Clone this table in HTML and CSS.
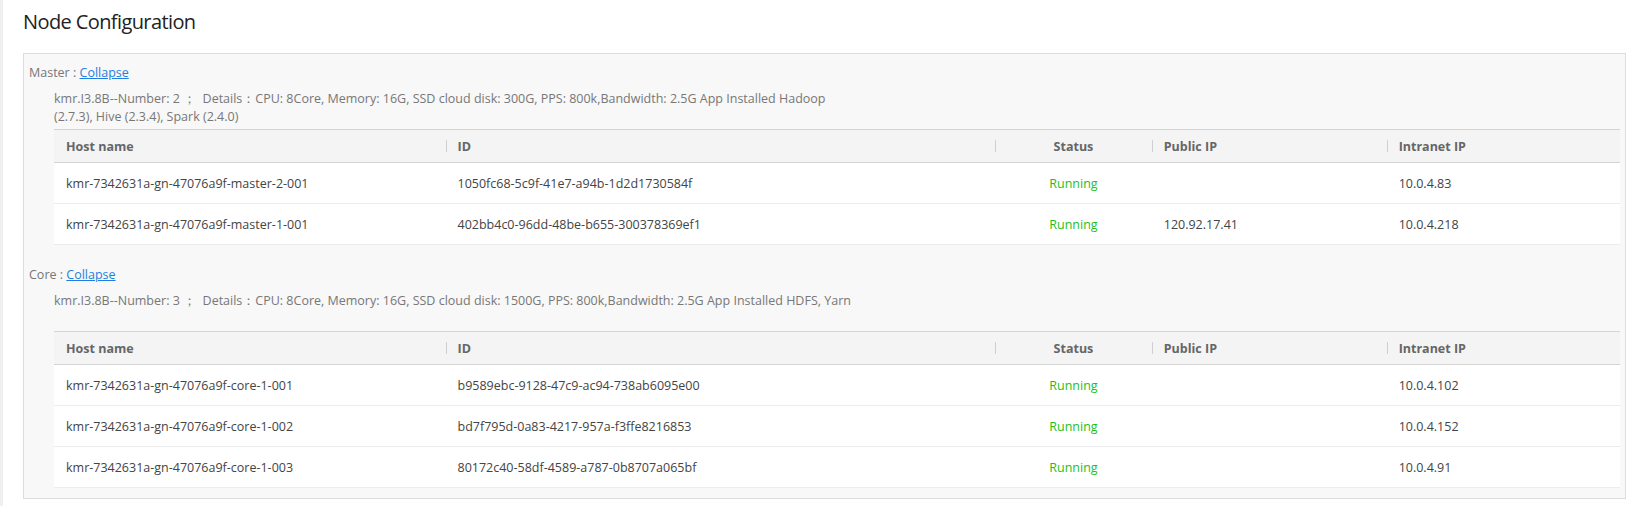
FILE: index.html
```html
<!DOCTYPE html>
<html lang="en">
<head>
<meta charset="utf-8">
<title>Node Configuration</title>
<link rel="stylesheet" href="styles.css">
</head>
<body>
<div class="page">
  <h1 class="title">Node Configuration</h1>
  <div class="panel">
    <section class="group">
      <div class="group-label">Master : <a href="#" class="link">Collapse</a></div>
      <div class="details">kmr.I3.8B--Number: 2 ；&nbsp; Details：CPU: 8Core, Memory: 16G, SSD cloud disk: 300G, PPS: 800k,Bandwidth: 2.5G App Installed Hadoop (2.7.3), Hive (2.3.4), Spark (2.4.0)</div>
      <table class="nodes">
        <colgroup><col class="c-host"><col class="c-id"><col class="c-status"><col class="c-pub"><col class="c-int"></colgroup>
        <thead>
          <tr><th>Host name</th><th class="sep">ID</th><th class="sep center">Status</th><th class="sep">Public IP</th><th class="sep">Intranet IP</th></tr>
        </thead>
        <tbody>
          <tr><td>kmr-7342631a-gn-47076a9f-master-2-001</td><td>1050fc68-5c9f-41e7-a94b-1d2d1730584f</td><td class="center running">Running</td><td></td><td>10.0.4.83</td></tr>
          <tr><td>kmr-7342631a-gn-47076a9f-master-1-001</td><td>402bb4c0-96dd-48be-b655-300378369ef1</td><td class="center running">Running</td><td>120.92.17.41</td><td>10.0.4.218</td></tr>
        </tbody>
      </table>
    </section>
    <section class="group">
      <div class="group-label">Core : <a href="#" class="link">Collapse</a></div>
      <div class="details">kmr.I3.8B--Number: 3 ；&nbsp; Details：CPU: 8Core, Memory: 16G, SSD cloud disk: 1500G, PPS: 800k,Bandwidth: 2.5G App Installed HDFS, Yarn</div>
      <table class="nodes">
        <colgroup><col class="c-host"><col class="c-id"><col class="c-status"><col class="c-pub"><col class="c-int"></colgroup>
        <thead>
          <tr><th>Host name</th><th class="sep">ID</th><th class="sep center">Status</th><th class="sep">Public IP</th><th class="sep">Intranet IP</th></tr>
        </thead>
        <tbody>
          <tr><td>kmr-7342631a-gn-47076a9f-core-1-001</td><td>b9589ebc-9128-47c9-ac94-738ab6095e00</td><td class="center running">Running</td><td></td><td>10.0.4.102</td></tr>
          <tr><td>kmr-7342631a-gn-47076a9f-core-1-002</td><td>bd7f795d-0a83-4217-957a-f3ffe8216853</td><td class="center running">Running</td><td></td><td>10.0.4.152</td></tr>
          <tr><td>kmr-7342631a-gn-47076a9f-core-1-003</td><td>80172c40-58df-4589-a787-0b8707a065bf</td><td class="center running">Running</td><td></td><td>10.0.4.91</td></tr>
        </tbody>
      </table>
    </section>
  </div>
</div>
</body>
</html>
```

FILE: styles.css
```css
html, body {
  margin: 0;
  padding: 0;
  background: #ffffff;
}

body {
  font-family: "Open Sans", "Noto Sans", sans-serif;
  font-size: 12.5px;
  color: #333;
}

.page {
  border-left: 3px solid #efefef;
  min-height: 506px;
  box-sizing: border-box;
  padding: 8px 16px 0 20px;
}

.title {
  margin: 0;
  font-size: 20px;
  font-weight: 400;
  letter-spacing: -0.6px;
  line-height: 28px;
  color: #222;
  height: 45px;
}

.panel {
  background: #f8f8f8;
  border: 1px solid #dddddd;
  padding: 0 5px 10px 5px;
}

.group {
  padding-top: 10px;
}

.group + .group {
  padding-top: 21px;
}

.group-label {
  line-height: 18px;
  color: #777;
}

.link {
  color: #1f7fe0;
  text-decoration: underline;
}

.details {
  margin: 8px 0 3px 25px;
  height: 36px;
  line-height: 18px;
  color: #777;
  max-width: 804px;
}

.nodes {
  margin-left: 25px;
  width: calc(100% - 25px);
  border-collapse: collapse;
  table-layout: fixed;
  background: #fff;
}

.c-host { width: 25%; }
.c-id { width: 35.1%; }
.c-status { width: 10%; }
.c-pub { width: 15%; }

.nodes th {
  height: 32px;
  padding: 0 12px;
  text-align: left;
  font-weight: 700;
  color: #666;
  background: #f4f4f4;
  border-top: 1px solid #d4d4d4;
  border-bottom: 1px solid #d4d4d4;
}

.nodes th.sep {
  background: #f4f4f4 linear-gradient(#cfcfcf, #cfcfcf) no-repeat left center / 1px 12px;
}

.nodes td {
  height: 40px;
  padding: 0 12px;
  border-bottom: 1px solid #ececec;
  color: #444;
  white-space: nowrap;
}

.nodes .center {
  text-align: center;
}

.nodes td.running {
  color: #1cbf1c;
}
```
